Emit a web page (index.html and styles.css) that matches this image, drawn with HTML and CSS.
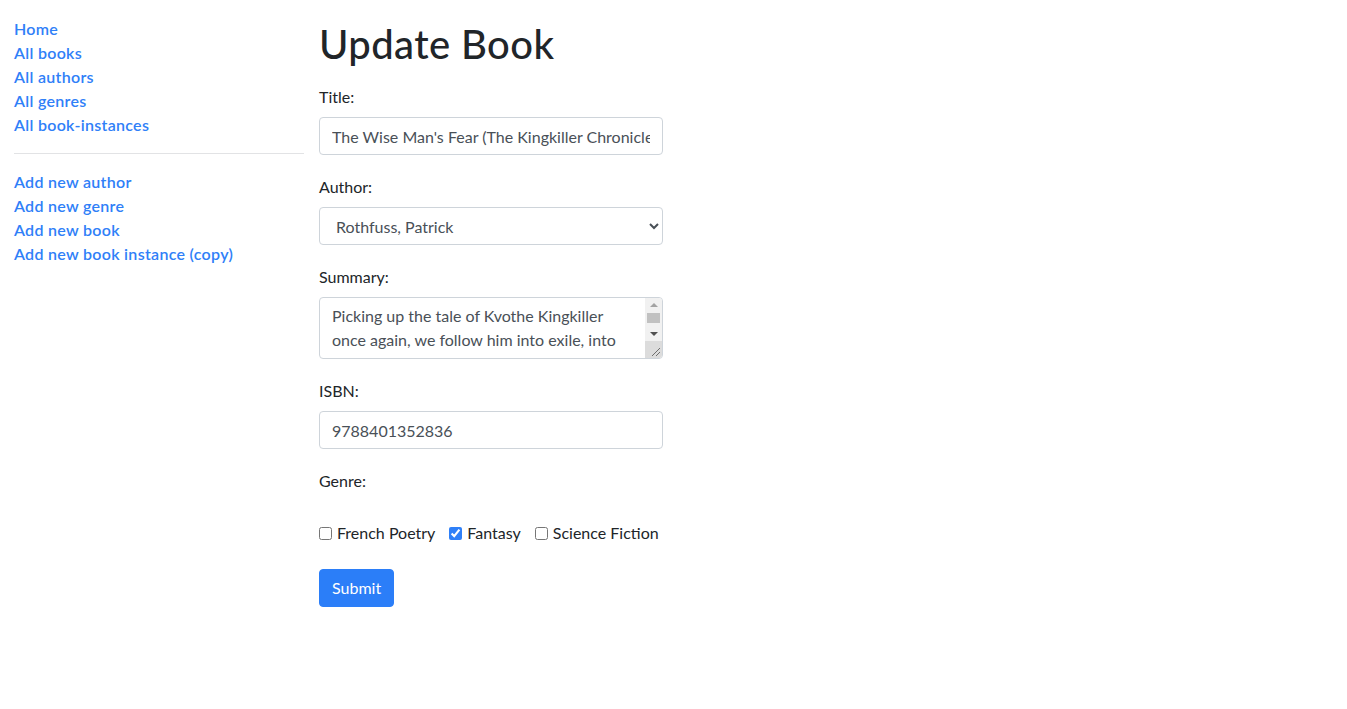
FILE: index.html
```html
<!DOCTYPE html>
<html lang="en">
<head>
<meta charset="utf-8">
<title>Update Book</title>
<link rel="stylesheet" href="styles.css">
</head>
<body>
<div class="page">
  <nav class="sidebar">
    <ul class="nav-list">
      <li><a href="#">Home</a></li>
      <li><a href="#">All books</a></li>
      <li><a href="#">All authors</a></li>
      <li><a href="#">All genres</a></li>
      <li><a href="#">All book-instances</a></li>
    </ul>
    <hr class="divider">
    <ul class="nav-list nav-list-second">
      <li><a href="#">Add new author</a></li>
      <li><a href="#">Add new genre</a></li>
      <li><a href="#">Add new book</a></li>
      <li><a href="#">Add new book instance (copy)</a></li>
    </ul>
  </nav>
  <main class="content">
    <h1 class="title">Update Book</h1>
    <form class="book-form">
      <div class="form-group">
        <label class="form-label" for="title">Title:</label>
        <input class="form-control" id="title" type="text" value="The Wise Man's Fear (The Kingkiller Chronicle, #2)">
      </div>
      <div class="form-group">
        <label class="form-label" for="author">Author:</label>
        <select class="form-control form-select" id="author">
          <option>Rothfuss, Patrick</option>
        </select>
      </div>
      <div class="form-group">
        <label class="form-label" for="summary">Summary:</label>
        <div class="textarea-wrap">
          <textarea class="form-control form-textarea" id="summary">Picking up the tale of Kvothe Kingkiller once again, we follow him into exile, into political intrigue, courtship, adventure, love and magic... and further along the path that has turned Kvothe, the mightiest magician of his age, a legend in his own time, into Kote, the unassuming pub landlord.</textarea>
          <div class="fake-scrollbar" aria-hidden="true">
            <div class="sb-btn sb-up"><span class="tri-up"></span></div>
            <div class="sb-track"><div class="sb-thumb"></div></div>
            <div class="sb-btn sb-down"><span class="tri-down"></span></div>
            <div class="sb-corner">
              <svg width="17" height="17" viewBox="0 0 17 17"><path d="M7 15 L15 7 M11 15 L15 11" stroke="#6e6e6e" stroke-width="1" fill="none"/></svg>
            </div>
          </div>
        </div>
      </div>
      <div class="form-group">
        <label class="form-label" for="isbn">ISBN:</label>
        <input class="form-control" id="isbn" type="text" value="9788401352836">
      </div>
      <div class="form-group">
        <label class="form-label">Genre:</label>
        <div class="checks">
          <label class="check"><input type="checkbox"> French Poetry</label>
          <label class="check"><input type="checkbox" checked> Fantasy</label>
          <label class="check"><input type="checkbox"> Science Fiction</label>
        </div>
      </div>
      <button class="btn-primary" type="button">Submit</button>
    </form>
  </main>
</div>
</body>
</html>
```
FILE: styles.css
```css
html, body {
  margin: 0;
  padding: 0;
  background: #fff;
}
body {
  font-family: Lato, "Noto Sans", sans-serif;
  font-size: 16px;
  line-height: 24px;
  color: #212529;
}
.page {
  display: grid;
  grid-template-columns: 290px 1fr;
  column-gap: 15px;
  padding-left: 14px;
}
.sidebar {
  padding-top: 17px;
}
.nav-list {
  list-style: none;
  margin: 0;
  padding: 0;
}
.nav-list a {
  color: #2f80f8;
  text-decoration: none;
  font-weight: 600;
  letter-spacing: 0.3px;
}
.divider {
  border: 0;
  border-top: 1px solid #e2e3e5;
  margin: 16px 0;
}
.content {
  padding-top: 20px;
}
.title {
  font-size: 40px;
  line-height: 48px;
  font-weight: 500;
  letter-spacing: 0.4px;
  margin: 0 0 17px;
  color: #212529;
}
.book-form {
  width: 344px;
}
.form-group {
  margin-bottom: 20px;
}
.form-label {
  display: block;
  margin-bottom: 8px;
}
.form-control {
  display: block;
  box-sizing: border-box;
  width: 344px;
  height: 38px;
  padding: 6px 12px;
  font-family: inherit;
  font-size: 16px;
  line-height: 24px;
  color: #495057;
  background: #fff;
  border: 1px solid #ced4da;
  border-radius: 4px;
  margin: 0;
}
.textarea-wrap {
  position: relative;
  width: 344px;
}
.form-textarea {
  height: 62px;
  resize: none;
  padding-right: 29px;
  overflow: hidden;
}
.fake-scrollbar {
  position: absolute;
  top: 1px;
  right: 1px;
  bottom: 1px;
  width: 17px;
  display: flex;
  flex-direction: column;
  background: #f1f1f1;
  border-radius: 0 3px 3px 0;
  overflow: hidden;
}
.sb-btn {
  height: 14px;
  display: flex;
  align-items: center;
  justify-content: center;
}
.sb-track {
  flex: 1;
  position: relative;
}
.sb-thumb {
  position: absolute;
  left: 2px;
  right: 2px;
  top: 1px;
  height: 10px;
  background: #c1c1c1;
}
.tri-up {
  width: 0;
  height: 0;
  border-left: 4px solid transparent;
  border-right: 4px solid transparent;
  border-bottom: 4px solid #a3a3a3;
}
.tri-down {
  width: 0;
  height: 0;
  border-left: 4px solid transparent;
  border-right: 4px solid transparent;
  border-top: 4px solid #505050;
}
.sb-corner {
  height: 17px;
  background: #dcdcdc;
  display: flex;
}
.checks {
  display: flex;
  gap: 14px;
  padding-top: 20px;
  white-space: nowrap;
}
.check {
  display: flex;
  align-items: center;
  gap: 5px;
}
.check input {
  margin: 0;
  width: 13px;
  height: 13px;
  accent-color: #2f80f8;
}
.btn-primary {
  font-family: inherit;
  font-size: 16px;
  line-height: 24px;
  padding: 6px 12px;
  color: #fff;
  background: #2b7ef8;
  border: 1px solid #2b7ef8;
  border-radius: 4px;
  margin-top: 4px;
}
```
